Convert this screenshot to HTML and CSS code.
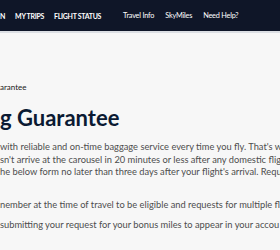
FILE: index.html
```html
<!DOCTYPE html>
<html lang="en">
<head>
  <meta charset="UTF-8" />
  <title>On-Time Baggage Guarantee</title>
  <link rel="stylesheet" href="styles.css">
</head>
<body>
  <!-- Barre de navigation -->
  <header class="topbar">
    <nav class="nav-main">
      <a>N</a>
      <a>MY TRIPS</a>
      <a>FLIGHT STATUS</a>
    </nav>
    <nav class="nav-sub">
      <a>Travel Info</a>
      <a>SkyMiles</a>
      <a>Need Help?</a>
    </nav>
  </header>

  <main class="page">
    <p class="crumb">arantee</p>
    <h1 class="title">g Guarantee</h1>

    <div class="intro">
      <p>with reliable and on-time baggage service every time you fly. That's w</p>
      <p>sn't arrive at the carousel in 20 minutes or less after any domestic flig</p>
      <p>he below form no later than three days after your flight's arrival. Requ</p>
    </div>

    <p class="line">nember at the time of travel to be eligible and requests for multiple fli</p>
    <p class="line">submitting your request for your bonus miles to appear in your accou</p>
  </main>
</body>
</html>
```

FILE: styles.css
```css
html, body {
  margin: 0;
  padding: 0;
  background-color: #f7f7f7;
  font-family: 'Lato', 'Open Sans', sans-serif;
  overflow: hidden;
}
.topbar {
  height: 31px;
  background-color: #0f1628;
  border-bottom: 2px solid #dcdfe4;
  display: flex;
  align-items: center;
  white-space: nowrap;
  color: #ffffff;
}
.topbar a {
  display: inline-block;
}
.nav-main {
  display: flex;
  gap: 10px;
  font-size: 7px;
  font-weight: bold;
  letter-spacing: -0.3px;
}
.nav-sub {
  display: flex;
  gap: 11px;
  margin-left: 22px;
  font-size: 7.3px;
  letter-spacing: -0.2px;
}
.page {
  white-space: nowrap;
  overflow: hidden;
}
.crumb {
  margin: 49px 0 0 0;
  font-size: 8px;
  color: #1a1a1a;
}
.title {
  margin: 12px 0 0 0;
  font-size: 22px;
  font-weight: bold;
  color: #0b1a33;
}
.intro {
  margin-top: 10px;
}
.intro p, .line {
  margin: 0;
  font-size: 9.3px;
  line-height: 12.5px;
  color: #4d4d4d;
}
.line {
  margin-top: 8px;
}
.intro + .line {
  margin-top: 20px;
}
```
